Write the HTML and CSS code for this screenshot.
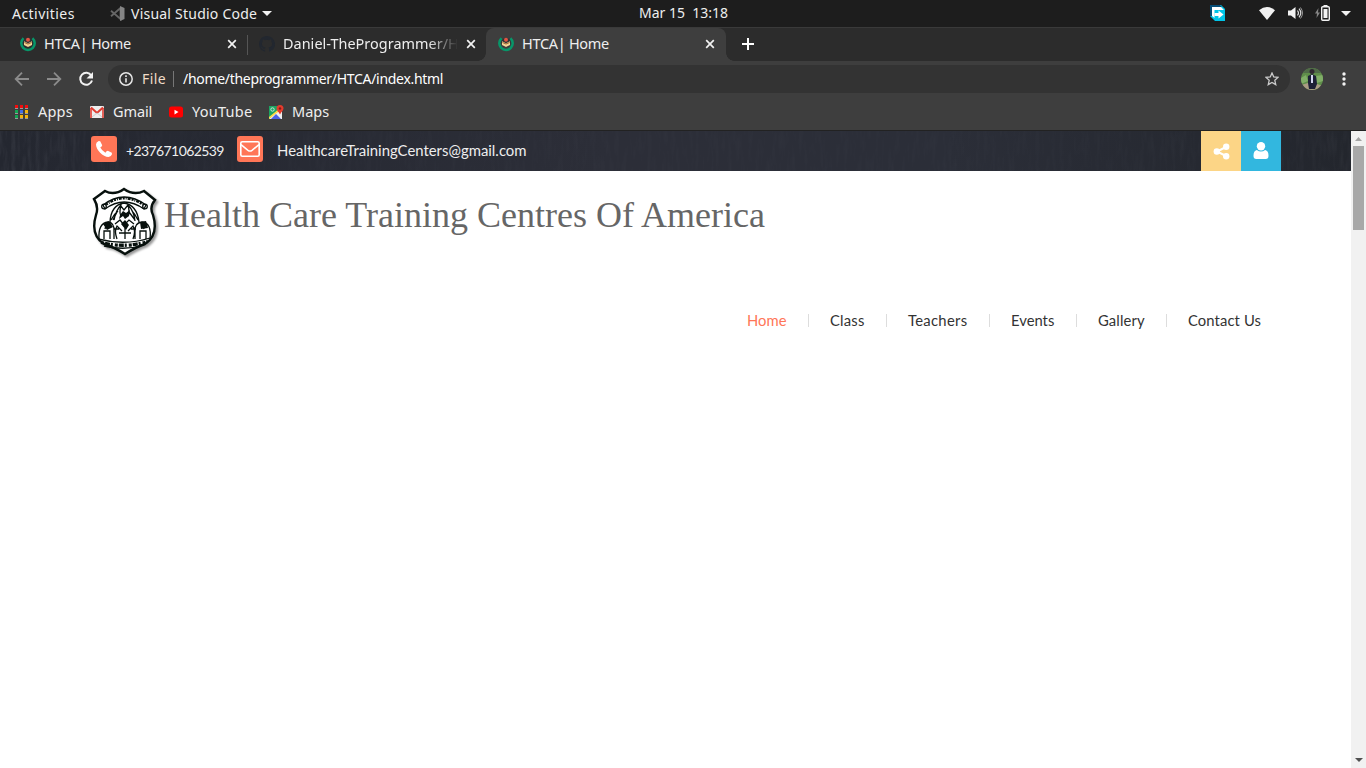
FILE: index.html
```html
<!DOCTYPE html>
<html lang="en">
<head>
<meta charset="utf-8">
<title>HTCA| Home</title>
<link rel="stylesheet" href="styles.css">
</head>
<body>
<svg class="defs" width="0" height="0">
  <symbol id="htca" viewBox="0 0 16 16"><path d="M3.600 2.200A6.700 6.700 0 1 0 12.400 2.200" fill="none" stroke="#079669" stroke-width="2.500"/><circle cx="8" cy="6.500" r="4.600" fill="#303235"/><path d="M4 5.200l4 2 4-2v3.800l-4 2-4-2z" fill="#f2d394"/><circle cx="8" cy="3.800" r="2" fill="#e25443"/><path d="M4.500 6.500L8 8l3.500-1.500" stroke="#965f32" fill="none"/></symbol>
  <symbol id="close" viewBox="0 0 10 10"><path d="M1.200 1.200l7.600 7.600M8.800 1.200L1.200 8.800" stroke="#f2f2f2" stroke-width="1.700"/></symbol>
  <symbol id="arrow" viewBox="0 0 16 16"><path d="M15 8H2M8 1.700L1.700 8 8 14.300" fill="none" stroke="#8b8b8b" stroke-width="1.800"/></symbol>
</svg>
<div class="desktop-bar">
  <span class="activities">Activities</span>
  <svg class="vscode" width="15" height="15" viewBox="0 0 15 15"><path d="M10.500 2v11L1 4.800M10.500 2L1 10.300" fill="none" stroke="#666" stroke-width="1.800"/><path d="M10 0l4.500 2v11L10 15z" fill="#858585"/></svg>
  <span class="app-name">Visual Studio Code</span>
  <svg class="app-caret" width="10" height="5"><path d="M0 0h10L5 5z" fill="#f2f2f2"/></svg>
  <span class="clock">Mar 15&nbsp; 13:18</span>
  <svg class="tray-app" width="15" height="16" viewBox="0 0 15 16"><path d="M0 0h11l4 4v12H5l-5-5z" fill="#00c5e8"/><path d="M0 0h10l2 2H2v9H0z" fill="#064d76"/><path d="M2 2h9l3 3H4.500v8L2 11z" fill="#fff"/><path d="M4.500 8h4V5.500l5 4-5 4V11h-4z" fill="#fff"/></svg>
  <svg class="wifi" width="16" height="13" viewBox="0 0 16 13"><path d="M0 3.200Q8-3 16 3.200L8 13z" fill="#f2f2f2"/></svg>
  <svg class="volume" width="16" height="14" viewBox="0 0 16 14"><path d="M0 4.500h3L7.500 1v12L3 9.500H0z" fill="#f2f2f2"/><path d="M9.500 4.500q2 2.500 0 5M11 2.700q3.600 4.300 0 8.600" fill="none" stroke="#ddd" stroke-width="1.200"/><path d="M12.500 1.500q4 5.500 0 11" fill="none" stroke="#999" stroke-width="1"/></svg>
  <svg class="battery" width="16" height="16" viewBox="0 0 16 16"><path d="M3.500 3L0 8.500h2L1.500 13 5 7.500H3z" fill="#858585"/><rect x="6.700" y="1.700" width="7.600" height="13.500" rx="1" fill="none" stroke="#f2f2f2" stroke-width="1.400"/><path d="M8.500 0h4v2h-4zM8.500 4h4v9h-4z" fill="#f2f2f2"/></svg>
  <svg class="tray-caret" width="10" height="5"><path d="M0 0h10L5 5z" fill="#f2f2f2"/></svg>
</div>
<div class="tabs">
  <div class="tab tab-first"><svg class="favicon"><use href="#htca"/></svg><span class="tab-title">HTCA| Home</span><svg class="close"><use href="#close"/></svg></div>
  <div class="tab tab-second"><svg class="favicon" viewBox="0 0 16 16"><path fill="#22272f" d="M8 0C3.580 0 0 3.580 0 8c0 3.540 2.290 6.530 5.470 7.590.4.070.550-.170.550-.380v-1.490c-2.010.370-2.530-.490-2.690-.940-.090-.230-.480-.940-.820-1.130-.280-.150-.680-.520-.010-.530.630-.010 1.080.580 1.230.820.720 1.210 1.870.870 2.330.660.070-.520.280-.870.510-1.070-1.780-.200-3.640-.890-3.640-3.950 0-.870.310-1.590.820-2.150-.080-.200-.360-1.020.080-2.120 0 0 .670-.210 2.200.820a7.600 7.600 0 0 1 4 0c1.530-1.040 2.200-.820 2.200-.820.440 1.100.160 1.920.080 2.120.510.560.820 1.270.820 2.150 0 3.070-1.870 3.750-3.650 3.950.290.250.540.730.540 1.480v2.200c0 .210.150.460.550.380A8 8 0 0 0 8 0z"/></svg><span class="tab-title repo">Daniel-TheProgrammer/H</span><svg class="close"><use href="#close"/></svg></div>
  <div class="tab tab-active"><svg class="favicon"><use href="#htca"/></svg><span class="tab-title">HTCA| Home</span><svg class="close"><use href="#close"/></svg></div>
  <svg class="plus" width="12" height="12"><path d="M6 0v12M0 6h12" stroke="#fff" stroke-width="2"/></svg>
</div>
<div class="toolbar">
  <svg class="nav-icon"><use href="#arrow"/></svg>
  <svg class="nav-icon flip"><use href="#arrow"/></svg>
  <svg class="nav-icon" viewBox="0 0 16 16"><path d="M13.300 4.500A6 6 0 1 0 14 9.500" fill="none" stroke="#f2f2f2" stroke-width="2"/><path d="M15 1v6.500H8.500z" fill="#f2f2f2"/></svg>
  <div class="address">
    <svg class="info" width="14" height="14"><circle cx="7" cy="7" r="6.200" fill="none" stroke="#e6e6e6" stroke-width="1.500"/><path d="M7 6.200v4.300M7 3.300v1.600" stroke="#e6e6e6" stroke-width="1.600"/></svg>
    <span class="scheme">File</span><span class="path">/home/theprogrammer/HTCA/index.html</span>
    <svg class="star" width="14" height="14" viewBox="0 0 14 14"><path d="M7 1l1.750 4 4.250.4-3.200 2.900.950 4.300L7 10.400l-3.750 2.200.950-4.300L1 5.400 5.250 5z" fill="none" stroke="#ccc" stroke-width="1.300"/></svg>
  </div>
  <svg class="avatar" width="22" height="22" viewBox="0 0 22 22"><clipPath id="round"><circle cx="11" cy="11" r="11"/></clipPath><g clip-path="url(#round)"><path d="M0 0h22v22H0z" fill="#5f8e4a"/><path d="M0 0h22v5H0z" fill="#506b48"/><path d="M0 10l5-3 2 6-7 3zM15 8l7-1v6l-6 2z" fill="#80ae67"/><path d="M0 17l7-2 9 1 6 2v4H0z" fill="#a99c83"/><path d="M7 8l4-2 4 2 1 8-2 5H8l-1-6z" fill="#1d2036"/><circle cx="11" cy="3.500" r="2.500" fill="#302a31"/><path d="M10 7h2v8h-2z" fill="#d3d7ef"/></g></svg>
  <svg class="menu" width="4" height="14"><circle cx="2" cy="2" r="1.700"/><circle cx="2" cy="7" r="1.700"/><circle cx="2" cy="12" r="1.700"/></svg>
</div>
<div class="bookmarks">
  <div class="bookmark apps"><svg width="14" height="14"><path d="M0 0h3v3H0zM5 0h3v3H5zM10 0h3v3h-3z" fill="#f20d0d"/><path d="M0 5h3v3H0zM0 10h3v3H0z" fill="#14a653"/><path d="M5 5h3v3H5z" fill="#406be8"/><path d="M10 5h3v3h-3zM5 10h3v3H5zM10 10h3v3h-3z" fill="#f4b30b"/><path d="M0 3h3v1H0zM5 3h3v1H5zM10 3h3v1h-3zM0 8h3v1H0zM5 8h3v1H5zM10 8h3v1h-3zM0 13h3v1H0zM5 13h3v1H5zM10 13h3v1h-3z" fill="#999"/></svg><span>Apps</span></div>
  <div class="bookmark gmail"><svg width="14" height="14"><rect y="1" width="14" height="12" rx="1" fill="#eee"/><path d="M1 13V3M13 3v10" stroke="#df3d32" stroke-width="1.600"/><path d="M1 2.500l6 5.500 6-5.500" fill="none" stroke="#df3d32" stroke-width="2"/><path d="M2 12l5-4 5 4" fill="none" stroke="#ccc"/></svg><span>Gmail</span></div>
  <div class="bookmark youtube"><svg width="14" height="14"><rect y="1.500" width="14" height="11" rx="2.500" fill="#f00"/><path d="M5.500 4.800l4 2.300-4 2.300z" fill="#fff"/></svg><span>YouTube</span></div>
  <div class="bookmark maps"><svg width="15" height="15"><path d="M0 1h13v13H0z" fill="#1da462"/><path d="M0 14L13 2v12z" fill="#eee"/><path d="M0 14V12L11 3l2 1z" fill="#ffdc45"/><path d="M2 14l5-5 5 5z" fill="#4b62e5"/><circle cx="3.500" cy="4.500" r="1.700" fill="none" stroke="#cde9dc"/><path d="M7.500 3.500a3.500 3.500 0 1 1 7 0c0 2-2 3-3.500 6-1.500-3-3.500-4-3.500-6z" fill="#e53b2c"/><circle cx="11" cy="3.500" r="1.200" fill="#811c17"/></svg><span>Maps</span></div>
</div>
<div class="viewport">
  <main class="page">
    <div class="contact-bar">
      <svg class="slate" width="1351" height="40"><filter id="grain" x="0" y="0" width="100%" height="100%"><feTurbulence type="fractalNoise" baseFrequency=".25 .04" numOctaves="3" seed="4"/><feColorMatrix values="0 0 0 0 .65  0 0 0 0 .68  0 0 0 0 .76  .8 0 0 0 -.32"/></filter><rect width="1351" height="40" filter="url(#grain)"/></svg>
      <div class="contact-inner">
        <span class="badge"><svg width="18" height="18" viewBox="0 0 18 18"><path d="M1 4.500Q1 2 3.700 1l1.500.2 2 4Q7 6.500 5.300 7.600q1.700 3.400 5.100 5.100Q11.500 11 12.800 10.800l4 2 .2 1.500Q16 17 13.500 17C8 17 1 10 1 4.500z" fill="#fff"/></svg></span>
        <span class="phone">+237671062539</span>
        <span class="badge"><svg width="20" height="16" viewBox="0 0 20 16"><rect x=".8" y=".8" width="18.400" height="14.400" rx="1.500" fill="none" stroke="#fff" stroke-width="1.600"/><path d="M1 3.700l7 5.600q2 1.400 4 0l7-5.600" fill="none" stroke="#fff" stroke-width="1.600"/></svg></span>
        <span class="email">HealthcareTrainingCenters@gmail.com</span>
        <span class="square share"><svg width="17" height="17" viewBox="0 0 17 17"><path d="M13 4L4 8.500l9 4.500" fill="none" stroke="#fff" stroke-width="2"/><g fill="#fff"><circle cx="13.200" cy="3.800" r="3.200"/><circle cx="3.800" cy="8.500" r="3.200"/><circle cx="13.200" cy="13.200" r="3.200"/></g></svg></span>
        <span class="square user"><svg width="16" height="17" viewBox="0 0 16 17"><circle cx="8" cy="4.300" r="4.200" fill="#fff"/><path d="M3.800 8Q8 11 12.200 8q3.300.8 3.300 5.800 0 3.200-2.700 3.200H3.200Q.5 17 .5 13.800.5 8.800 3.800 8z" fill="#fff"/></svg></span>
      </div>
    </div>
    <header class="brand">
      <svg class="crest" width="66" height="69" viewBox="0 0 66 69">
        <path d="M2 12L13 4q9 5 19-2 10 7 20 2l11 9q-6 7-2 15 6 20-8 29-9 3-20 10-11-7-21-10Q-2 48 4 28q3-8-2-16z" class="shield"/>
        <g fill="none" stroke="#07100d" stroke-width="1.300">
          <path d="M11 18Q32 2 54 18l-2 4Q32 8 13 22z"/>
          <path d="M14 17.500Q32 5 51 17.500" stroke-width="2.500" stroke-dasharray="2 1 1 1 3 1"/>
          <circle cx="12" cy="19.500" r="2.300"/><circle cx="53" cy="19.500" r="2.300"/>
          <path d="M18 35q1-17 14-19 13 2 15 19M22 33q2-10 7-15-2 8 0 11M28 18l4 5 4-5M43 34q-1-10-7-16 2 7 0 11M19 33q3-6 7-9M46 33q-3-6-6-9M23 37l5-4 4 5 5-5 5 4M37 25l6 8M25 25l-4 8"/>
          <path d="M7 52q-1-16 9-17 7 1 6 10v7m-4 0v-8h-6v8m3-17l-2 7M58 52q2-16-8-17-8 1-7 10v7m5 0v-8h6v8m-4-17l2 7M25 52q-3-8 0-13l5 5m11 8q3-8 0-13l-5 5M27 46h12M33 41v11M22 42h5M39 42h5"/>
          <path d="M6 52q27 7 52-1M12 59q21 5 40-1"/>
          <path d="M9 55.500q24 6 47-1" stroke-width="3.300" stroke-dasharray="3 1 5 1 2 2"/>
        </g>
        <path d="M28 28l3-4 3 2 4-3-1 6-4 3-2-3-4 3zM29 37l4-4 4 5-3 5zM11 37l6-3 4 6-6 3zM48 35l6-1 2 7-7 1z" fill="#07100d"/>
      </svg>
      <h1>Health Care Training Centres Of America</h1>
    </header>
    <nav><a class="home">Home</a><a class="class">Class</a><a class="teachers">Teachers</a><a class="events">Events</a><a class="gallery">Gallery</a><a class="contact">Contact Us</a></nav>
  </main>
  <div class="scrollbar"><svg width="7" height="4"><path d="M3.500 0L7 4H0z" fill="#a3a3a3"/></svg><div class="thumb"></div><svg class="down" width="8" height="4"><path d="M0 0h8L4 4z" fill="#505050"/></svg></div>
</div>
</body>
</html>
```

FILE: styles.css
```css
* { box-sizing: border-box; }
body { margin: 0; height: 768px; overflow: hidden; background: #fff; font: 14.5px/20px "Noto Sans", sans-serif; color: #eee; white-space: nowrap; }
svg { display: block; flex: none; }
.defs { position: absolute; }
span { flex: none; }
.desktop-bar { height: 28px; background: #1d1d1d; border-bottom: 1px solid #3a3a3a; display: flex; align-items: center; padding-left: 12px; font-size: 14px; }
.activities { width: 98px; letter-spacing: .45px; }
.app-name { width: 125px; margin-left: 6px; letter-spacing: .23px; }
.app-caret { margin-left: 6px; }
.clock { width: 90px; margin-left: 367px; padding-bottom: 1px; }
.tray-app { margin-left: 481px; margin-bottom: 1px; }
.wifi { margin-left: 34px; margin-bottom: 1px; }
.volume { margin-left: 13px; margin-bottom: 1px; }
.battery { margin-left: 11px; margin-bottom: 1px; }
.tray-caret { margin-left: 10px; }
.tabs { height: 33px; display: flex; align-items: center; background: #2c2c2c; }
.tab { height: 33px; display: flex; align-items: center; }
.tab-first { width: 248px; padding-left: 20px; background: linear-gradient(#555, #555) right center / 1px 20px no-repeat; }
.tab-second { width: 238px; padding-left: 11px; }
.tab-active { position: relative; width: 240px; padding-left: 12px; border-radius: 8px 8px 0 0; background: #3e3e3e; }
.tab-active::before, .tab-active::after { content: ""; position: absolute; bottom: 0; width: 8px; height: 8px; }
.tab-active::before { left: -8px; background: radial-gradient(circle at 0 0, transparent 7.5px, #3e3e3e 8px); }
.tab-active::after { right: -8px; background: radial-gradient(circle at 100% 0, transparent 7.5px, #3e3e3e 8px); }
.favicon { width: 16px; height: 16px; margin-bottom: 1px; }
.tab-title { width: 175px; margin-left: 8px; padding-bottom: 3px; overflow: hidden; letter-spacing: -.3px; }
.repo { letter-spacing: .05px; font-size: 14.4px; padding-bottom: 1px; mask-image: linear-gradient(90deg, #000 83%, transparent); }
.close { width: 10px; height: 10px; margin: 0 0 1px 8px; }
.plus { margin: 0 0 1px 16px; }
.toolbar { height: 36px; background: #3e3e3e; display: flex; align-items: center; padding-left: 14px; }
.nav-icon { width: 16px; height: 16px; margin-right: 16px; }
.flip { transform: scaleX(-1); }
.address { width: 1182px; height: 28px; margin-left: -2px; border-radius: 14px; background: #333; display: flex; align-items: center; padding-left: 11px; font-size: 14px; }
.scheme { width: 32px; margin-left: 9px; border-right: 1px solid #777; line-height: 16px; letter-spacing: .4px; color: #f0dcc8; }
.path { width: 262px; margin-left: 9px; letter-spacing: -.3px; color: #fff; }
.star { margin-left: auto; margin-right: 11px; }
.avatar { margin-left: 11px; }
.menu { margin-left: 19px; fill: #f2f2f2; }
.bookmarks { height: 34px; background: #3e3e3e; border-bottom: 1px solid #222; display: flex; align-items: center; padding: 0 0 3px 15px; }
.bookmark { display: flex; align-items: center; gap: 9px; }
.bookmark span { padding-bottom: 2px; }
.apps { width: 75px; letter-spacing: .2px; }
.gmail { width: 79px; letter-spacing: -.1px; }
.youtube { width: 100px; letter-spacing: .25px; }
.maps { gap: 8px; }
.viewport { height: 637px; display: flex; }
.page { width: 1351px; background: #fff; }
.contact-bar { height: 40px; position: relative; background: linear-gradient(90deg, #242730, #2c2e38 45%, #2b2e38 70%, #23262d); }
.slate { position: absolute; left: 0; top: 0; opacity: .22; mask-image: linear-gradient(90deg, #000, rgba(0, 0, 0, .25) 12%, rgba(0, 0, 0, .25) 80%, rgba(0, 0, 0, .5)); }
.contact-inner { position: relative; height: 40px; display: flex; align-items: center; padding-left: 91px; font: 14.9px/20px Lato, sans-serif; }
.badge { width: 26px; height: 26px; margin-bottom: 4px; border-radius: 3px; background: #ff7657; display: grid; place-items: center; }
.phone { width: 98px; margin: 0 13px 0 9px; font-size: 14px; letter-spacing: -.6px; }
.email { width: 250px; margin-left: 14px; padding-bottom: 2px; }
.square { width: 40px; height: 40px; display: grid; place-items: center; }
.share { margin-left: 674px; background: #fcd586; }
.user { background: #32b7df; padding-right: 1px; padding-bottom: 2px; }
.brand { display: flex; align-items: flex-start; padding: 16px 0 0 92px; height: 130px; }
.crest { filter: drop-shadow(2px 2px 1px #999); }
.shield { fill: #fff; stroke: #07100d; stroke-width: 2.4; }
h1 { margin: 8px 0 0 6px; font: 36px/40px "Liberation Serif", serif; color: #666; }
nav { height: 40px; display: flex; align-items: center; padding: 0 0 2px 747px; font: 14.8px/20px Lato, sans-serif; color: #333; }
nav a { flex: none; background: linear-gradient(#ddd, #ddd) right 21px center / 1px 13px no-repeat; }
.home { width: 83px; color: #ff7657; }
.class { width: 78px; letter-spacing: .2px; }
.teachers { width: 103px; letter-spacing: .3px; }
.events { width: 87px; }
.gallery { width: 90px; letter-spacing: .1px; }
.contact { background: none; letter-spacing: .1px; }
.scrollbar { width: 15px; background: #f1f1f1; display: flex; flex-direction: column; align-items: center; padding: 6px 0; }
.thumb { width: 11px; height: 84px; margin-top: 5px; background: #a8a8a8; }
.down { margin-top: auto; }
```
